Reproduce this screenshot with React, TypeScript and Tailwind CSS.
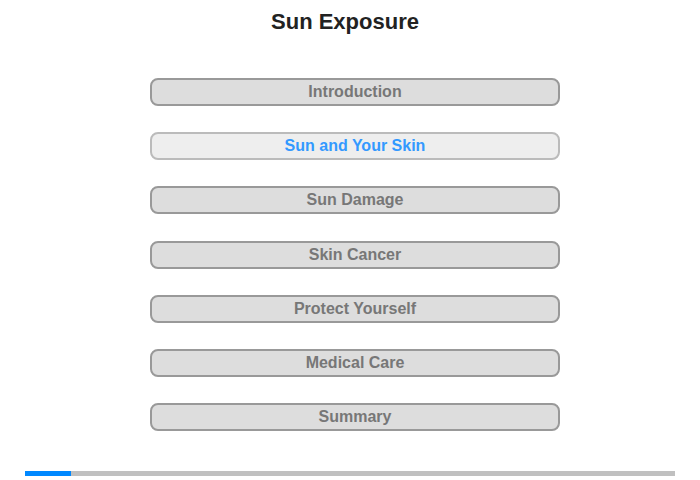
import React from "react";

const items = [
  "Introduction",
  "Sun and Your Skin",
  "Sun Damage",
  "Skin Cancer",
  "Protect Yourself",
  "Medical Care",
  "Summary",
];

export default function App() {
  return (
    <div className="w-[700px] h-[480px] bg-white flex flex-col items-center" style={{ fontFamily: '"Liberation Sans", Arial, sans-serif' }}>
      <h1 className="mr-[10px] pt-[9px] text-[22px] leading-[26px] font-bold text-[#222]">Sun Exposure</h1>
      <div className="ml-[10px] mt-[43px] flex flex-col gap-[26.2px]">
        {items.map((t, i) => {
          const active = i === 1;
          return (
            <div
              key={t}
              className={
                active
                  ? "w-[410px] h-[28px] rounded-[8px] border-2 border-[#bbbbbb] bg-[#eeeeee] flex items-center justify-center text-[16px] font-bold text-[#3399ff]"
                  : "w-[410px] h-[28px] rounded-[8px] border-2 border-[#999999] bg-[#dddddd] flex items-center justify-center text-[16px] font-bold text-[#777777]"
              }
            >
              {t}
            </div>
          );
        })}
      </div>
      <div className="mt-auto mb-[4px] w-[650px] h-[5px] bg-[#c0c0c0] flex">
        <div className="w-[46px] h-full bg-[#0088ff]" />
      </div>
    </div>
  );
}
